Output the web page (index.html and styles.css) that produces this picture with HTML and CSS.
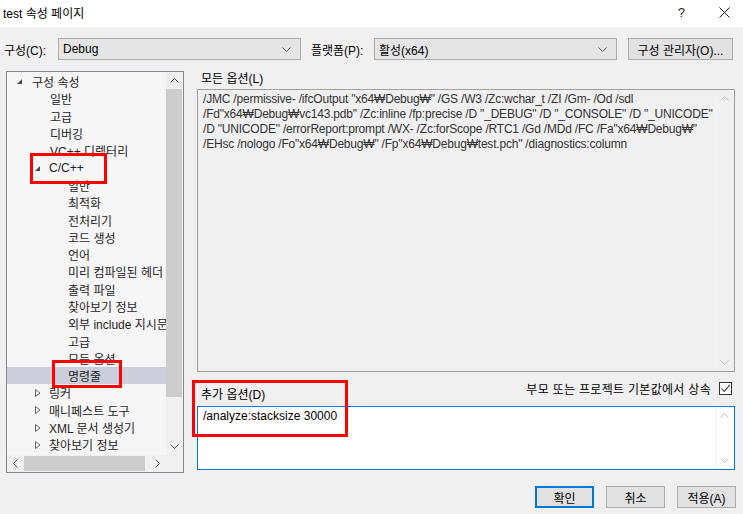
FILE: index.html
```html
<!DOCTYPE html>
<html lang="ko">
<head>
    <meta charset="UTF-8">
    <title>test 속성 페이지</title>
    <link rel="stylesheet" href="styles.css">
</head>
<body>
    <div class="titlebar">
        <span class="title">test 속성 페이지</span>
        <span class="help">?</span>
        <svg class="close" width="11" height="11" viewBox="0 0 11 11"><path d="M0.5 0.5 L10.5 10.5 M10.5 0.5 L0.5 10.5" stroke="#1a1a1a" stroke-width="1" fill="none"/></svg>
    </div>

    <div class="toolbar">
        <span class="tb-label lbl-config">구성(C):</span>
        <div class="combo">
            <span>Debug</span>
            <svg width="9" height="5" viewBox="0 0 9 5"><path d="M0.5 0.5 L4.5 4.5 L8.5 0.5" stroke="#606060" fill="none"/></svg>
        </div>
        <span class="tb-label lbl-platform">플랫폼(P):</span>
        <div class="combo">
            <span>활성(x64)</span>
            <svg width="9" height="5" viewBox="0 0 9 5"><path d="M0.5 0.5 L4.5 4.5 L8.5 0.5" stroke="#606060" fill="none"/></svg>
        </div>
        <button class="btn btn-manager">구성 관리자(O)...</button>
    </div>

    <div class="main">
        <div class="tree">
            <div class="tree-body">
                <div class="tree-list">
                    <div class="row lvl0"><span class="tw"><svg width="5" height="5" viewBox="0 0 5 5"><path d="M5 0 L5 5 L0 5 Z" fill="#4d4d4d"/></svg></span>구성 속성</div>
                    <div class="row lvl1">일반</div>
                    <div class="row lvl1">고급</div>
                    <div class="row lvl1">디버깅</div>
                    <div class="row lvl1">VC++ 디렉터리</div>
                    <div class="row lvl1 twisted"><span class="tw"><svg width="5" height="5" viewBox="0 0 5 5"><path d="M5 0 L5 5 L0 5 Z" fill="#4d4d4d"/></svg></span>C/C++</div>
                    <div class="row lvl2">일반</div>
                    <div class="row lvl2">최적화</div>
                    <div class="row lvl2">전처리기</div>
                    <div class="row lvl2">코드 생성</div>
                    <div class="row lvl2">언어</div>
                    <div class="row lvl2">미리 컴파일된 헤더</div>
                    <div class="row lvl2">출력 파일</div>
                    <div class="row lvl2">찾아보기 정보</div>
                    <div class="row lvl2">외부 include 지시문</div>
                    <div class="row lvl2">고급</div>
                    <div class="row lvl2">모든 옵션</div>
                    <div class="row lvl2 selected">명령줄</div>
                    <div class="row lvl1 twisted"><span class="tw"><svg width="6" height="8" viewBox="0 0 6 8"><path d="M0.5 0.5 L5 4 L0.5 7.5 Z" fill="none" stroke="#666"/></svg></span>링커</div>
                    <div class="row lvl1 twisted"><span class="tw"><svg width="6" height="8" viewBox="0 0 6 8"><path d="M0.5 0.5 L5 4 L0.5 7.5 Z" fill="none" stroke="#666"/></svg></span>매니페스트 도구</div>
                    <div class="row lvl1 twisted"><span class="tw"><svg width="6" height="8" viewBox="0 0 6 8"><path d="M0.5 0.5 L5 4 L0.5 7.5 Z" fill="none" stroke="#666"/></svg></span>XML 문서 생성기</div>
                    <div class="row lvl1 twisted"><span class="tw"><svg width="6" height="8" viewBox="0 0 6 8"><path d="M0.5 0.5 L5 4 L0.5 7.5 Z" fill="none" stroke="#666"/></svg></span>찾아보기 정보</div>
                </div>
                <div class="vscroll">
                    <div class="arrow"><svg width="9" height="5" viewBox="0 0 9 5"><path d="M0.5 4.5 L4.5 0.5 L8.5 4.5" stroke="#606060" fill="none"/></svg></div>
                    <div class="vtrack"><div class="vthumb"></div></div>
                    <div class="arrow"><svg width="9" height="5" viewBox="0 0 9 5"><path d="M0.5 0.5 L4.5 4.5 L8.5 0.5" stroke="#606060" fill="none"/></svg></div>
                </div>
            </div>
            <div class="hscroll">
                <div class="arrow"><svg width="5" height="9" viewBox="0 0 5 9"><path d="M4.5 0.5 L0.5 4.5 L4.5 8.5" stroke="#606060" fill="none"/></svg></div>
                <div class="htrack"><div class="hthumb"></div></div>
                <div class="arrow"><svg width="5" height="9" viewBox="0 0 5 9"><path d="M0.5 0.5 L4.5 4.5 L0.5 8.5" stroke="#606060" fill="none"/></svg></div>
                <div class="corner"></div>
            </div>
        </div>

        <div class="options">
            <div class="field-label top-label">모든 옵션(L)</div>
            <div class="textbox readonly">
                <div class="tb-text all-options">
                    <div>/JMC /permissive- /ifcOutput "x64₩Debug₩" /GS /W3 /Zc:wchar_t /ZI /Gm- /Od /sdl</div>
                    <div>/Fd"x64₩Debug₩vc143.pdb" /Zc:inline /fp:precise /D "_DEBUG" /D "_CONSOLE" /D "_UNICODE"</div>
                    <div>/D "UNICODE" /errorReport:prompt /WX- /Zc:forScope /RTC1 /Gd /MDd /FC /Fa"x64₩Debug₩"</div>
                    <div>/EHsc /nologo /Fo"x64₩Debug₩" /Fp"x64₩Debug₩test.pch" /diagnostics:column</div>
                </div>
                <div class="tb-scroll">
                    <svg width="9" height="5" viewBox="0 0 9 5"><path d="M0.5 4.5 L4.5 0.5 L8.5 4.5" stroke="#c2c2c2" fill="none"/></svg>
                    <svg width="9" height="5" viewBox="0 0 9 5"><path d="M0.5 0.5 L4.5 4.5 L8.5 0.5" stroke="#c2c2c2" fill="none"/></svg>
                </div>
            </div>
            <div class="between">
                <div class="field-label">추가 옵션(D)</div>
                <div class="inherit">
                    <span class="inherit-text">부모 또는 프로젝트 기본값에서 상속</span>
                    <span class="checkbox"><svg width="11" height="11" viewBox="0 0 11 11"><path d="M1.5 5.5 L4.2 8.5 L9.8 1.8" stroke="#333" stroke-width="1.1" fill="none"/></svg></span>
                </div>
            </div>
            <div class="textbox editable">
                <div class="tb-text">
                    <div>/analyze:stacksize 30000</div>
                </div>
                <div class="tb-scroll">
                    <svg width="9" height="5" viewBox="0 0 9 5"><path d="M0.5 4.5 L4.5 0.5 L8.5 4.5" stroke="#c2c2c2" fill="none"/></svg>
                    <svg width="9" height="5" viewBox="0 0 9 5"><path d="M0.5 0.5 L4.5 4.5 L8.5 0.5" stroke="#c2c2c2" fill="none"/></svg>
                </div>
            </div>
        </div>
    </div>

    <div class="buttons">
        <button class="btn btn-ok">확인</button>
        <button class="btn">취소</button>
        <button class="btn">적용(A)</button>
    </div>

    <!-- red annotation boxes -->
    <div class="mark mark-cpp"></div>
    <div class="mark mark-cmd"></div>
    <div class="mark mark-extra"></div>
</body>
</html>
```

FILE: styles.css
```css
body {
    margin: 0;
    width: 743px;
    height: 514px;
    overflow: hidden;
    background-color: #f0f0f0;
    font-family: "Liberation Sans", "Noto Sans CJK KR", sans-serif;
    font-size: 12px;
    color: #1a1a1a;
    position: relative;
}
.titlebar {
    height: 27px;
    background-color: #fff;
    display: flex;
    align-items: center;
    padding: 0 13px 2px 3px;
    box-sizing: border-box;
}
.titlebar .title {
    flex: 1;
    color: #000;
}
.titlebar .help {
    font-size: 13px;
    margin-right: 34px;
}
.toolbar {
    display: flex;
    align-items: center;
    height: 22px;
    margin-top: 11px;
    padding-left: 4px;
}
.tb-label {
    color: #000;
}
.lbl-config {
    width: 54px;
}
.lbl-platform {
    width: 63px;
    margin-left: 10px;
}
.combo {
    width: 243px;
    height: 22px;
    box-sizing: border-box;
    background-color: #e5e5e5;
    border: 1px solid #acacac;
    display: flex;
    align-items: center;
    justify-content: space-between;
    padding: 0 9px 0 4px;
    color: #000;
}
.btn {
    font-family: inherit;
    font-size: 12px;
    color: #000;
    background-color: #e1e1e1;
    border: 1px solid #adadad;
    height: 22px;
    padding: 0;
    box-sizing: border-box;
}
.btn-manager {
    width: 105px;
    margin-left: 11px;
}
.main {
    display: grid;
    grid-template-columns: 178px 538px;
    column-gap: 13px;
    margin-top: 11px;
    padding-left: 6px;
    height: 402px;
}
.tree {
    border: 1px solid #828790;
    background-color: #f6f6f6;
    display: flex;
    flex-direction: column;
}
.tree-body {
    flex: 1;
    display: flex;
    min-height: 0;
}
.tree-list {
    flex: 1;
    overflow: hidden;
    padding-top: 1px;
}
.row {
    height: 17.3px;
    display: flex;
    align-items: center;
    white-space: nowrap;
    color: #1e1e1e;
}
.row .tw {
    display: flex;
    align-items: center;
    flex-shrink: 0;
}
.lvl0 {
    padding-left: 10px;
}
.lvl0 .tw {
    width: 15px;
}
.lvl1 {
    padding-left: 43px;
}
.lvl1.twisted {
    padding-left: 28px;
}
.lvl1.twisted .tw {
    width: 14px;
}
.lvl2 {
    padding-left: 61px;
}
.selected {
    background-color: #cccedb;
}
.vscroll {
    width: 17px;
    display: flex;
    flex-direction: column;
    background-color: #f0f0f0;
}
.arrow {
    width: 17px;
    height: 17px;
    display: flex;
    align-items: center;
    justify-content: center;
    flex-shrink: 0;
}
.vtrack {
    flex: 1;
}
.vthumb {
    height: 308px;
    width: 16px;
    background-color: #cdcdcd;
}
.hscroll {
    height: 17px;
    display: flex;
    background-color: #f0f0f0;
}
.htrack {
    flex: 1;
    display: flex;
    align-items: center;
}
.hthumb {
    width: 121px;
    height: 15px;
    background-color: #cdcdcd;
}
.corner {
    width: 17px;
    background-color: #f0f0f0;
}
.options {
    display: flex;
    flex-direction: column;
}
.field-label {
    color: #000;
}
.top-label {
    height: 18px;
    line-height: 16px;
    padding-left: 4px;
}
.textbox {
    display: flex;
    box-sizing: border-box;
}
.textbox.readonly {
    height: 283px;
    border: 1px solid #a0a0a0;
    background-color: #f0f0f0;
    color: #333;
}
.textbox.editable {
    height: 64px;
    border: 1px solid #0078d7;
    background-color: #fff;
    color: #000;
}
.tb-text {
    flex: 1;
    padding: 2px 0 0 5px;
    line-height: 15px;
    white-space: nowrap;
    overflow: hidden;
}
.all-options {
    letter-spacing: -0.2px;
}
.tb-scroll {
    width: 17px;
    margin-right: 1px;
    border-left: 1px solid #f2f2f2;
    display: flex;
    flex-direction: column;
    justify-content: space-between;
    align-items: center;
    padding: 6px 0 6px;
}
.between {
    height: 34px;
    display: flex;
    justify-content: space-between;
}
.between .field-label {
    align-self: flex-end;
    padding-left: 4px;
    padding-bottom: 4px;
}
.inherit {
    display: flex;
    align-items: center;
    margin-top: 9px;
    height: 14px;
    color: #000;
}
.inherit-text {
    letter-spacing: 0.3px;
}
.checkbox {
    width: 13px;
    height: 13px;
    box-sizing: border-box;
    border: 1px solid #333;
    background-color: #fff;
    margin-left: 8px;
    margin-right: 3px;
    display: flex;
    align-items: center;
    justify-content: center;
}
.buttons {
    display: flex;
    justify-content: flex-end;
    gap: 12px;
    margin-top: 13px;
    padding-right: 7px;
}
.buttons .btn {
    width: 59px;
    height: 22px;
}
.btn-ok {
    border: 2px solid #0078d7 !important;
}
.mark {
    position: absolute;
    border: 3px solid #ff0000;
    box-sizing: border-box;
}
.mark-cpp {
    left: 30px;
    top: 153px;
    width: 77px;
    height: 31px;
}
.mark-cmd {
    left: 52px;
    top: 360px;
    width: 70px;
    height: 28px;
}
.mark-extra {
    left: 192px;
    top: 380px;
    width: 156px;
    height: 57px;
}
```
